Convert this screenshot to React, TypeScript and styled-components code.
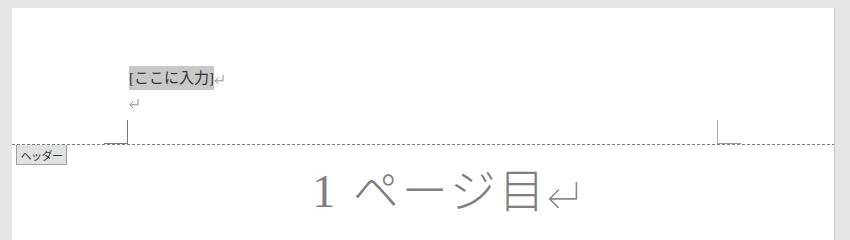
import React from 'react'
import styled, { createGlobalStyle } from 'styled-components'

const GlobalStyle = createGlobalStyle`
	html, body {
		margin: 0;
		padding: 0;
		background: #e6e6e6;
		overflow: hidden;
	}
`

const StyledWorkspace = styled.div`
	display: flex;
	width: 850px;
	height: 100vh;
	padding: 8px 0 0 12px;
	box-sizing: border-box;
	overflow: hidden;
`
const StyledPage = styled.div`
	width: 823px;
	background: #ffffff;
	border-right: 1px solid #c8c8c8;
	box-sizing: border-box;
`
const StyledHeaderArea = styled.div`
	display: flex;
	flex-direction: column;
	height: 136px;
	padding: 58px 0 0 0;
	box-sizing: border-box;
`
const StyledHeaderText = styled.div`
	display: flex;
	flex-direction: column;
	padding-left: 117px;
	font-family: 'Liberation Serif', 'Noto Sans CJK JP', serif;
	font-size: 15px;
	color: #333;
`
const StyledLine = styled.div`
	display: flex;
	align-items: center;
	height: 24px;
`
const StyledHighlight = styled.span`
	background: #c8c8c8;
	height: 24px;
	line-height: 24px;
`
const StyledMarksRow = styled.div`
	display: flex;
	justify-content: space-between;
	margin-top: auto;
	padding: 0 93px 0 92px;
`
const StyledCropMark = styled.div<{ side: 'left' | 'right' }>`
	width: 24px;
	height: 24px;
	box-sizing: border-box;
	border-bottom: 1px solid #7a7a7a;
	${(p) =>
		p.side === 'left'
			? 'border-right: 1px solid #7a7a7a;'
			: 'border-left: 1px solid #b0b0b0; border-bottom-color: #9a9a9a;'}
`
const StyledDivider = styled.div`
	height: 1px;
	background: repeating-linear-gradient(
		90deg,
		#7a7a7a 0 3px,
		transparent 3px 5px
	);
`
const StyledTab = styled.div`
	display: inline-flex;
	align-items: center;
	justify-content: center;
	margin-left: 4px;
	width: 51px;
	height: 20px;
	box-sizing: border-box;
	background: #e1e1e1;
	border: 1px solid #a0a0a0;
	border-top: none;
	font-family: 'Noto Sans CJK JP', sans-serif;
	font-size: 11px;
	color: #333;
	letter-spacing: -0.5px;
`
const StyledBody = styled.div`
	display: flex;
	justify-content: center;
	padding: 0 0 0 44px;
`
const StyledTitle = styled.div`
	display: flex;
	align-items: center;
	margin-top: 2px;
	font-family: 'Liberation Serif', 'Noto Sans CJK JP', serif;
	font-size: 46px;
	line-height: 50px;
	font-weight: 300;
	color: #7f7f7f;
	letter-spacing: 3px;
`
const StyledReturnSvg = styled.svg<{ $offset: number }>`
	flex: none;
	margin-top: ${(p) => `${p.$offset}px`};
`

// Word-style paragraph mark
function ReturnMark({ w, h, offset = 0, stroke = 1 }: { w: number; h: number; offset?: number; stroke?: number }) {
	const head = h * 0.35
	return (
		<StyledReturnSvg $offset={offset} width={w} height={h} viewBox={`0 0 ${w} ${h}`}>
			<path
				d={`M${w - stroke} 0 V${h - head} H${stroke} M${stroke + head} ${h - head * 2} L${stroke} ${h - head} L${stroke + head} ${h}`}
				fill="none"
				stroke="#8a8a8a"
				strokeWidth={stroke}
			/>
		</StyledReturnSvg>
	)
}

export default function App() {
	return (
		<StyledWorkspace>
			<GlobalStyle />
			<StyledPage>
				<StyledHeaderArea>
					<StyledHeaderText>
						<StyledLine>
							<StyledHighlight>[ここに入力]</StyledHighlight>
							<ReturnMark w={10} h={9} offset={2} />
						</StyledLine>
						<StyledLine>
							<ReturnMark w={10} h={9} offset={2} />
						</StyledLine>
					</StyledHeaderText>
					<StyledMarksRow>
						<StyledCropMark side="left" />
						<StyledCropMark side="right" />
					</StyledMarksRow>
				</StyledHeaderArea>
				<StyledDivider />
				<StyledTab>ヘッダー</StyledTab>
				<StyledBody>
					<StyledTitle>
						1 ページ目
						<ReturnMark w={30} h={26} offset={6} stroke={1.6} />
					</StyledTitle>
				</StyledBody>
			</StyledPage>
		</StyledWorkspace>
	)
}
